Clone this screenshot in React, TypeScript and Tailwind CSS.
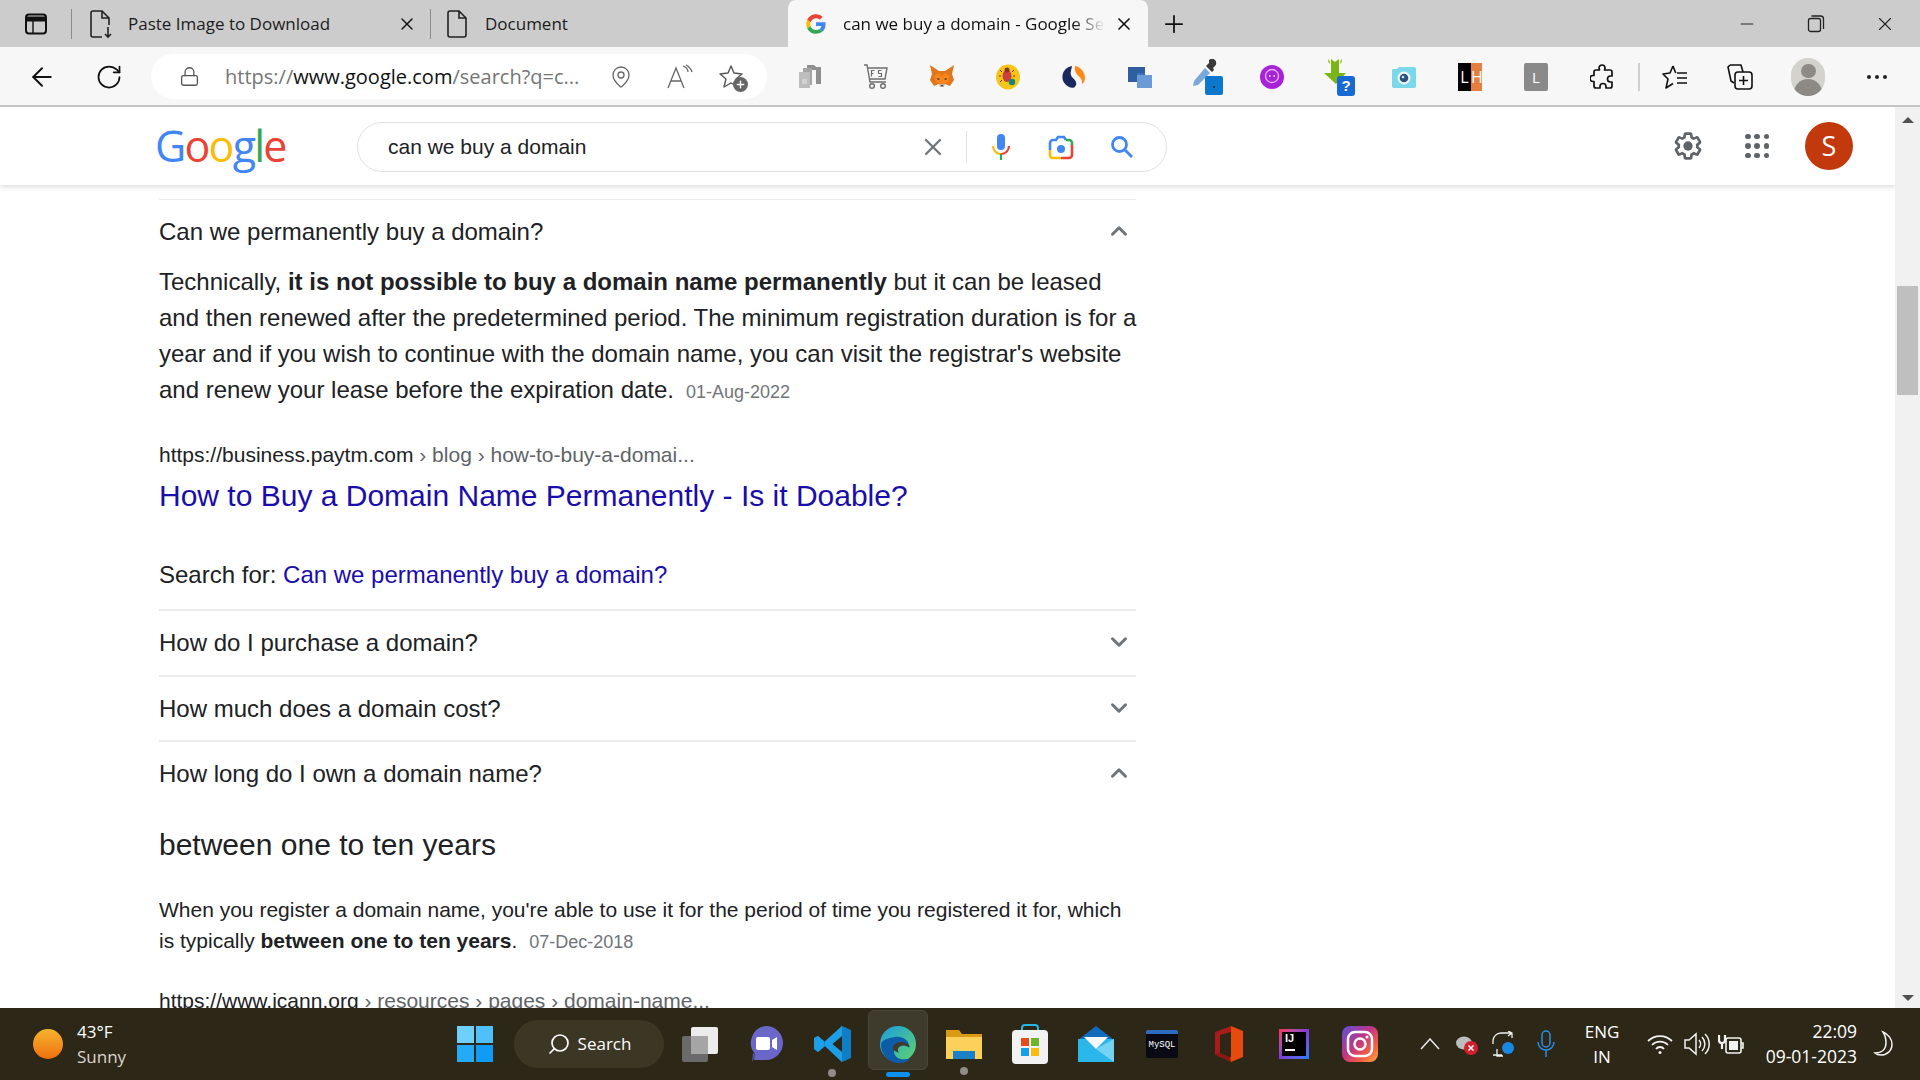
import React from "react";
import {
  ArrowLeft,
  ChevronDown,
  ChevronUp,
  Lock,
  MapPin,
  Minus,
  Plus,
  RotateCw,
  Search,
  X,
} from "lucide-react";

function PageIcon({ download = false }: { download?: boolean }) {
  return (
    <svg width="24" height="30" viewBox="0 0 24 30" fill="none" stroke="#222" strokeWidth="1.6">
      <path d="M4 2h9l7 7v7M20 9h-7V2M4 2Q2 2 2 4v22q0 2 2 2h9" />
      {download ? <path d="M19 18v10m-3-3 3 3 3-3" /> : <path d="M13 28h5q2 0 2-2V16" />}
    </svg>
  );
}

function SidebarIcon() {
  return (
    <svg width="24" height="24" viewBox="0 0 24 24" fill="none" stroke="#111" strokeWidth="2">
      <rect x="2" y="2.5" width="20" height="19" rx="3" />
      <path d="M2 7h20" strokeWidth="5" />
      <path d="M9 8v13" strokeWidth="1.4" />
    </svg>
  );
}

function GFavicon() {
  return (
    <svg width="20" height="20" viewBox="0 0 48 48">
      <path fill="#ea4335" d="M24 10c3.500 0 6.600 1.200 9.100 3.500l6.800-6.800C35.800 2.900 30.300.5 24 .5 14.800.5 6.900 5.800 3 13.500l7.900 6.100C12.800 14 17.900 10 24 10z" />
      <path fill="#4285f4" d="M47 24.500c0-1.600-.2-3.200-.4-4.500H24v9h13c-.6 3-2.300 5.500-4.800 7.200l7.700 6C44.300 38 47 31.800 47 24.500z" />
      <path fill="#fbbc05" d="M10.900 28.700A14 14 0 0 1 10.900 19.600L3 13.500a23.500 23.500 0 0 0 0 21z" />
      <path fill="#34a853" d="M24 47.500c6.300 0 11.600-2.100 15.900-5.300l-7.700-6c-2.100 1.400-4.900 2.300-8.200 2.300-6.100 0-11.200-4-13.100-9.800L3 34.500C6.900 42.200 14.800 47.500 24 47.500z" />
    </svg>
  );
}

function TabItem({
  icon,
  title,
  className,
  closeClass,
}: {
  icon: React.ReactNode;
  title: string;
  className: string;
  closeClass: string;
}) {
  return (
    <div className={`flex items-center h-full ${className}`}>
      <div className="w-[54px] flex justify-center shrink-0">{icon}</div>
      <span className="text-[17px] text-[#1c1c1c] whitespace-nowrap">{title}</span>
      <X size={20} strokeWidth={1.7} className={`text-[#111] shrink-0 ${closeClass}`} />
    </div>
  );
}

function TabBar() {
  return (
    <div className="h-[47px] bg-[#cccccc] flex items-center relative">
      <div className="w-[71px] flex justify-center">
        <SidebarIcon />
      </div>
      <div className="w-px h-[30px] bg-[#8a8a8a]" />
      <TabItem
        icon={<PageIcon download />}
        title="Paste Image to Download"
        className="w-[358px] pl-[2px]"
        closeClass="ml-[67px]"
      />
      <div className="w-px h-[30px] bg-[#8a8a8a]" />
      <TabItem
        icon={<PageIcon />}
        title="Document"
        className="w-[357px]"
        closeClass="ml-[219px]"
      />
      <div className="h-full w-[360px] bg-[#f7f7f7] rounded-t-[8px] flex items-center">
        <div className="w-[55px] flex justify-center">
          <GFavicon />
        </div>
        <span className="text-[17px] text-[#111] w-[262px] overflow-hidden whitespace-nowrap [mask-image:linear-gradient(to_right,black_88%,transparent)]">
          can we buy a domain - Google Search
        </span>
        <X size={20} strokeWidth={2} className="text-[#111] ml-[9px]" />
      </div>
      <Plus size={28} strokeWidth={1.5} className="text-[#111] ml-[12px]" />
      <Minus size={20} strokeWidth={1.3} className="text-[#222] ml-[549px]" />
      <svg className="ml-[50px]" width="18" height="20" viewBox="0 0 18 20" fill="none" stroke="#222" strokeWidth="1.3">
        <rect x="1.500" y="4.500" width="12" height="13" rx="2" />
        <path d="M4.500 2h9a3 3 0 0 1 3 3v10" />
      </svg>
      <X size={22} strokeWidth={1.2} className="text-[#222] ml-[49px]" />
    </div>
  );
}

function Slot({ children, className = "" }: { children: React.ReactNode; className?: string }) {
  return <div className={`flex items-center justify-center shrink-0 w-[66px] ${className}`}>{children}</div>;
}

function FoxIcon() {
  return (
    <svg width="26" height="26" viewBox="0 0 26 26">
      <path fill="#e2761b" d="M1 1l9 6h6l9-6-2 9 2 6-4 6-5-2h-6l-5 2-4-6 2-6z" />
      <path fill="#f6851b" d="M5 12l5-3 3 3 3-3 5 3-2 6-4 2h-4l-4-2z" />
      <path fill="#c0ad9e" d="M10 20h6l-1 3h-4z" />
      <path fill="#233447" d="M8 14l3 1-2 1zM18 14l-3 1 2 1zM12 21h2l-1 2z" />
    </svg>
  );
}

function ExtensionIcons() {
  return (
    <>
      <Slot>
        <svg width="24" height="26" viewBox="0 0 24 26">
          <path fill="#8f8f8f" d="M9 1h7l2 2h5v17h-5V6H9z" />
          <path fill="#a5a5a5" d="M5 4h9v17H5z" />
          <path fill="#bdbdbd" d="M1 8h11v16H1z" />
          <path fill="#d2d2d2" d="M4 15h5v5H4z" />
        </svg>
      </Slot>
      <Slot>
        <svg width="26" height="26" viewBox="0 0 26 26" fill="none" stroke="#6d6d6d" strokeWidth="1.400">
          <path d="M1 1h3l3 17h16" />
          <path d="M5 4h19l-2 11H7" />
          <circle cx="9" cy="22" r="2.300" />
          <circle cx="20" cy="22" r="2.300" />
          <path d="M10 7H7v6M7 10h2M17 7h-3v3h3v3h-3" strokeWidth="1.200" transform="translate(1.500 -.5)" />
        </svg>
      </Slot>
      <Slot>
        <FoxIcon />
      </Slot>
      <Slot>
        <svg width="24" height="26" viewBox="0 0 24 26">
          <ellipse cx="12" cy="13" rx="12" ry="12.500" fill="#f5c518" />
          <ellipse cx="11" cy="12" rx="4.500" ry="6" fill="#c9403e" />
          <circle cx="11" cy="6" r="2.500" fill="#8b3033" />
          <path stroke="#7a2a2a" strokeWidth="1" d="M6 8l-2-2M16 8l2-2M5 12H3M17 12h2M6 16l-2 2" />
          <circle cx="16" cy="18" r="3.200" fill="#16857a" />
        </svg>
      </Slot>
      <Slot>
        <svg width="24" height="24" viewBox="0 0 24 24">
          <path fill="#1b2a5e" d="M10 1a11 11 0 0 0-3 21c3 1.500 6 1 7-2 1-3-1-5-3-7-2-2-3-4-2-7 .2-2 1-4 1-5z" />
          <path fill="#ff8a1a" d="M13 1c4 0 10 5 10 12 0 2-1 5-3 6 .5-3-.5-5-2.500-7C15 9.500 12 7 13 1z" />
        </svg>
      </Slot>
      <Slot>
        <svg width="24" height="24" viewBox="0 0 24 24">
          <rect x="0" y="2" width="17" height="15" fill="#2f5f9e" />
          <rect x="9" y="10" width="15" height="13" fill="#6b9bd6" />
          <path fill="#3d72b8" d="M9 8h8v2H9z" />
        </svg>
      </Slot>
      <Slot className="relative">
        <svg width="32" height="36" viewBox="0 0 32 36" className="ml-[2px]">
          <path fill="#3a3a3a" d="M18 1a4 4 0 0 1 6 6l-2 2 1 2-2 2-6-6 2-2 1-1z" />
          <path fill="#7ba7d9" d="M14 9l5 5L7 26l-5 1 1-5z" />
          <rect x="14" y="17" width="18" height="19" rx="2" fill="#0b78ce" />
          <circle cx="23" cy="28" r="1" fill="#06223d" />
        </svg>
      </Slot>
      <Slot>
        <svg width="24" height="24" viewBox="0 0 24 24">
          <circle cx="12" cy="12" r="12" fill="#a823d8" />
          <circle cx="12" cy="11" r="6.500" fill="none" stroke="#e3b4f3" strokeWidth="1.300" />
          <path stroke="#fff" strokeWidth="1.500" d="M9 11h1.500M13.500 11H15" />
        </svg>
      </Slot>
      <Slot className="relative">
        <svg width="34" height="38" viewBox="0 0 34 38" className="ml-[2px]">
          <path fill="#7cb518" d="M9 1l4 3 4-3v14h7L14 26 2 15h7z" />
          <path fill="#a6d13a" d="M6 1l2 2v3L6 4zM20 1v3l-2 2V3z" />
          <rect x="15" y="18" width="18" height="20" rx="3" fill="#1769d4" />
          <text x="24" y="33" textAnchor="middle" fill="#fff" fontSize="15" fontWeight="700" fontFamily="Liberation Sans">?</text>
        </svg>
      </Slot>
      <Slot>
        <svg width="24" height="22" viewBox="0 0 24 22">
          <path fill="#7ad8ea" d="M1 3h4l2-2h15a2 2 0 0 1 2 2v17a2 2 0 0 1-2 2H2a2 2 0 0 1-2-2V4z" />
          <circle cx="12" cy="12" r="6.500" fill="#f2f8fb" />
          <circle cx="12" cy="12" r="4.300" fill="#27537c" />
          <circle cx="11" cy="11" r="1.300" fill="#cfe4f2" />
        </svg>
      </Slot>
      <Slot>
        <div className="w-[24px] h-[28px] flex text-[16px] leading-[28px] text-white text-center font-['Open_Sans',sans-serif]">
          <span className="w-[13px] bg-black">L</span>
          <span className="w-[11px] bg-[#e47f3f]">H</span>
        </div>
      </Slot>
      <Slot>
        <div className="w-[24px] h-[28px] rounded-[2px] bg-[#8a8a8a] text-white text-center text-[15px] leading-[28px] font-['Open_Sans',sans-serif]">
          L
        </div>
      </Slot>
      <Slot>
        <svg width="24" height="26" viewBox="0 0 24 26" fill="none" stroke="#111" strokeWidth="1.700" strokeLinejoin="round">
          <path d="M9 4a3 3 0 0 1 6 0c0 1-.5 1.500-.5 2H20q2 0 2 2v4h-1.500a3 3 0 0 0 0 6H22v4q0 2-2 2h-4v-1.500a3 3 0 0 0-6 0V24H6q-2 0-2-2v-4.500H3a3 3 0 0 1 0-6h1V8q0-2 2-2h3.500C9.500 5.500 9 5 9 4z" />
        </svg>
      </Slot>
    </>
  );
}

function Toolbar() {
  return (
    <div className="h-[60px] bg-[#f7f7f7] border-b-2 border-[#c4c4c4] flex items-center pt-[1px]">
      <ArrowLeft size={30} strokeWidth={1.5} className="text-[#111] ml-[27px]" />
      <RotateCw size={28} strokeWidth={1.500} className="text-[#111] ml-[38px]" />
      <div className="ml-[28px] w-[616px] h-[45px] rounded-full bg-white flex items-center shrink-0">
        <Lock size={21} strokeWidth={1.500} className="text-[#555] ml-[28px]" />
        <span className="ml-[25px] text-[20px] text-[#767676] whitespace-nowrap font-['Open_Sans',sans-serif] w-[357px]">
          https://<span className="text-[#111]">www.google.com</span>/search?q=c...
        </span>
        <MapPin size={24} strokeWidth={1.300} className="text-[#666] ml-[27px]" />
        <svg className="ml-[34px]" width="26" height="26" viewBox="0 0 26 26" fill="none" stroke="#666" strokeWidth="1.300">
          <path d="M1 24 9 4l8 20M4 17h10" />
          <path d="M16 2c3 1 5 3 5 6M19 1c3 1.500 5 4 6 7" />
        </svg>
        <div className="relative ml-[26px] w-[26px] h-[26px]">
          <svg width="26" height="26" viewBox="0 0 26 26" fill="none" stroke="#555" strokeWidth="1.400" strokeLinejoin="round">
            <path d="M12 2l3 7 8 1-6 5 2 8-7-4-7 4 2-8-6-5 8-1z" />
          </svg>
          <div className="absolute right-[-3px] bottom-[-2px] w-[15px] h-[15px] rounded-full bg-[#666] text-white flex items-center justify-center">
            <Plus size={11} strokeWidth={3} />
          </div>
        </div>
      </div>
      <div className="ml-[10px] flex items-center">
        <ExtensionIcons />
      </div>
      <div className="w-[2px] h-[28px] bg-[#cfcfcf] ml-[3px]" />
      <svg className="ml-[22px]" width="26" height="26" viewBox="0 0 26 26" fill="none" stroke="#111" strokeWidth="1.600" strokeLinejoin="round">
        <path d="M11 2l2.500 6.500H13M11 2 8 9l-7 1 5 5-2 9 7-4.500" />
        <path d="M15 9h10M15 14h10M15 19h10" />
      </svg>
      <svg className="ml-[39px]" width="26" height="28" viewBox="0 0 26 28" fill="none" stroke="#111" strokeWidth="1.600" strokeLinejoin="round">
        <path d="M3 2h11l2 7M3 2 1 4l3 14 3 2" />
        <rect x="8" y="9" width="17" height="17" rx="3" />
        <path d="M16.500 13v9M12 17.500h9" />
      </svg>
      <div className="ml-[38px] w-[34px] h-[38px] rounded-full bg-[#d3d2cd] overflow-hidden flex flex-col items-center">
        <div className="w-[15px] h-[18px] mt-[6px] rounded-full bg-[#8d8a85]" />
        <div className="w-[28px] h-[20px] mt-[1px] rounded-t-full bg-[#8d8a85]" />
      </div>
      <div className="ml-[42px] flex gap-[4px]">
        <span className="w-[4px] h-[4px] rounded-full bg-[#222]" />
        <span className="w-[4px] h-[4px] rounded-full bg-[#222]" />
        <span className="w-[4px] h-[4px] rounded-full bg-[#222]" />
      </div>
    </div>
  );
}

function GoogleLogo() {
  return (
    <div className="w-[126px] ml-[-2px] mr-[2px] text-[43px] leading-[50px] tracking-[-1.800px] font-medium font-['Open_Sans',sans-serif] whitespace-nowrap">
      <span className="text-[#4285f4]">G</span>
      <span className="text-[#ea4335]">o</span>
      <span className="text-[#fbbc05]">o</span>
      <span className="text-[#4285f4]">g</span>
      <span className="text-[#34a853]">l</span>
      <span className="text-[#ea4335]">e</span>
    </div>
  );
}

function SearchHeader() {
  return (
    <div className="h-[78px] shrink-0 bg-white flex items-center pl-[157px] shadow-[0_2px_5px_rgba(0,0,0,0.14)] relative z-10">
      <GoogleLogo />
      <div className="ml-[74px] mt-[2px] w-[810px] h-[50px] rounded-full border border-[#dfe1e5] flex items-center shrink-0">
        <span className="ml-[30px] text-[21px] text-[#202124] w-[530px] font-['Liberation_Sans',sans-serif]">can we buy a domain</span>
        <X size={28} strokeWidth={1.900} className="text-[#70757a] ml-[1px]" />
        <div className="w-px h-[32px] bg-[#dfe1e5] ml-[19px]" />
        <svg className="ml-[24px]" width="20" height="28" viewBox="0 0 20 28" fill="none">
          <rect x="6" y="1" width="8" height="16" rx="4" fill="#4285f4" />
          <path d="M2 13a8 8 0 0 0 8 8" stroke="#fbbc05" strokeWidth="2.200" />
          <path d="M18 13a8 8 0 0 1-8 8" stroke="#ea4335" strokeWidth="2.200" />
          <path d="M10 21v6" stroke="#34a853" strokeWidth="2.200" />
        </svg>
        <svg className="ml-[37px]" width="26" height="26" viewBox="0 0 26 26" fill="none" strokeWidth="2.600">
          <path d="M2 16v-7a3 3 0 0 1 3-3h3l2-3h6l2 3" stroke="#4285f4" />
          <path d="M18 6h3a3 3 0 0 1 3 3v2" stroke="#34a853" />
          <path d="M24 11v10a3 3 0 0 1-3 3h-8" stroke="#ea4335" />
          <path d="M13 24H5a3 3 0 0 1-3-3v-5" stroke="#fbbc05" />
          <circle cx="13" cy="15" r="4" fill="#4285f4" stroke="none" />
        </svg>
        <svg className="ml-[36px]" width="24" height="24" viewBox="0 0 24 24" fill="none" stroke="#4285f4" strokeWidth="2.800">
          <circle cx="9.500" cy="9.500" r="7" />
          <path d="M14.500 14.500 22 22" />
        </svg>
      </div>
      <svg className="ml-[505px]" width="32" height="32" viewBox="0 0 24 24" fill="#5f6368">
        <path d="M13.850 22.250h-3.700c-.74 0-1.360-.54-1.470-1.270l-.27-1.890c-.27-.14-.53-.29-.79-.46l-1.800.72c-.7.260-1.470-.03-1.810-.65L2.200 15.530c-.35-.66-.2-1.440.36-1.880l1.530-1.190c-.01-.15-.02-.3-.02-.46 0-.15.01-.31.02-.46l-1.520-1.190c-.59-.45-.74-1.260-.37-1.880l1.850-3.190c.34-.62 1.110-.9 1.790-.63l1.810.73c.26-.17.52-.32.780-.46l.27-1.910c.11-.7.730-1.250 1.460-1.250h3.700c.74 0 1.360.54 1.470 1.270l.27 1.890c.27.140.53.290.79.460l1.800-.72c.71-.26 1.480.030 1.820.650l1.840 3.180c.36.660.200 1.440-.36 1.880l-1.520 1.190c.01.150.02.300.02.460s-.01.310-.02.460l1.520 1.190c.560.450.720 1.230.370 1.860l-1.860 3.220c-.34.620-1.110.900-1.800.630l-1.800-.720c-.26.170-.52.320-.78.460l-.27 1.910c-.1.680-.72 1.220-1.470 1.220zm-3.260-2h2.820l.37-2.550.53-.22c.44-.18.880-.44 1.340-.78l.45-.34 2.380.96 1.410-2.450-2.030-1.580.07-.56c.03-.26.060-.51.060-.78s-.03-.53-.06-.78l-.07-.56 2.030-1.580-1.390-2.400-2.390.96-.45-.35c-.42-.32-.87-.58-1.330-.77l-.52-.22-.37-2.550h-2.820l-.37 2.550-.53.210c-.44.190-.88.440-1.340.790l-.45.330-2.380-.95-1.390 2.390 2.030 1.580-.07.560a7 7 0 0 0-.06.790c0 .26.020.530.060.780l.07.560-2.030 1.580 1.410 2.450 2.380-.960.450.350c.43.330.860.580 1.330.770l.53.220.38 2.550z" />
        <circle cx="12" cy="12" r="3.500" />
      </svg>
      <div className="ml-[41px] grid grid-cols-3 gap-[4px] w-[24px]">
        {Array.from({ length: 9 }).map((_, i) => (
          <span key={i} className="w-[5.500px] h-[5.500px] rounded-full bg-[#5f6368]" />
        ))}
      </div>
      <div className="ml-[36px] w-[48px] h-[48px] rounded-full bg-[#c1390c] text-white text-[27px] flex items-center justify-center">
        S
      </div>
    </div>
  );
}

function QuestionRow({ label, open, className }: { label: string; open?: boolean; className: string }) {
  return (
    <div className={`flex items-center justify-between pr-[8px] text-[24px] text-[#202124] ${className}`}>
      <span>{label}</span>
      {open ? (
        <ChevronUp size={26} strokeWidth={2.800} className="text-[#70757a] mr-[-4px] mt-[-2px]" />
      ) : (
        <ChevronDown size={26} strokeWidth={2.800} className="text-[#70757a] mr-[-4px] mt-[-2px]" />
      )}
    </div>
  );
}

function ResultsColumn() {
  return (
    <div className="ml-[159px] w-[977px] font-['Liberation_Sans',sans-serif]">
      <div className="h-px bg-[#ebebeb] mt-[14px]" />
      <QuestionRow label="Can we permanently buy a domain?" open className="h-[64px]" />
      <p className="text-[24px] leading-[36px] text-[#202124] mr-[-6px]">
        Technically, <b>it is not possible to buy a domain name permanently</b> but it can be leased and then renewed
        after the predetermined period. The minimum registration duration is for a year and if you wish to continue
        with the domain name, you can visit the registrar's website and renew your lease before the expiration date.
        <span className="text-[18px] text-[#70757a] ml-[12px]">01-Aug-2022</span>
      </p>
      <div className="mt-[30px] text-[21px] leading-[30px] text-[#202124]">
        https://business.paytm.com <span className="text-[#5f6368]">› blog › how-to-buy-a-domai...</span>
      </div>
      <div className="mt-[6px] text-[30px] leading-[40px] text-[#1a0dab]">
        How to Buy a Domain Name Permanently - Is it Doable?
      </div>
      <div className="mt-[41px] text-[24px] leading-[36px] text-[#202124]">
        Search for: <span className="text-[#1a0dab]">Can we permanently buy a domain?</span>
      </div>
      <div className="h-[2px] bg-[#ebebeb] mt-[16px]" />
      <QuestionRow label="How do I purchase a domain?" className="h-[64px]" />
      <div className="h-[2px] bg-[#ebebeb]" />
      <QuestionRow label="How much does a domain cost?" className="h-[63px]" />
      <div className="h-[2px] bg-[#ebebeb]" />
      <QuestionRow label="How long do I own a domain name?" open className="h-[63px]" />
      <div className="mt-[20px] text-[30px] leading-[40px] text-[#202124]">between one to ten years</div>
      <p className="mt-[29px] text-[21px] leading-[31px] text-[#202124]">
        When you register a domain name, you're able to use it for the period of time you registered it for, which is
        typically <b>between one to ten years</b>.
        <span className="text-[18px] text-[#70757a] ml-[12px]">07-Dec-2018</span>
      </p>
      <div className="mt-[28px] text-[21px] leading-[30px] text-[#202124]">
        https://www.icann.org <span className="text-[#5f6368]">› resources › pages › domain-name...</span>
      </div>
    </div>
  );
}

function Scrollbar() {
  return (
    <div className="w-[25px] shrink-0 bg-[#f1f1f1] flex flex-col items-center">
      <div className="mt-[10px] w-0 h-0 border-x-[6px] border-x-transparent border-b-[6px] border-b-[#505050]" />
      <div className="mt-[163px] w-[21px] h-[109px] bg-[#bfbfbf]" />
      <div className="mt-auto mb-[7px] w-0 h-0 border-x-[6px] border-x-transparent border-t-[6px] border-t-[#505050]" />
    </div>
  );
}

function WindowsLogo() {
  return (
    <div className="grid grid-cols-2 gap-[2px] w-[36px] h-[36px]">
      <span className="bg-[#6fd0fb]" />
      <span className="bg-[#4fc0fa]" />
      <span className="bg-[#25aaf8]" />
      <span className="bg-[#109bf5]" />
    </div>
  );
}

function TaskbarApps() {
  return (
    <>
      <Slot>
        <svg width="36" height="36" viewBox="0 0 36 36">
          <rect x="0" y="10" width="26" height="26" rx="2" fill="#6a6a6a" />
          <rect x="9" y="1" width="27" height="27" rx="2" fill="#ececec" />
          <rect x="9" y="10" width="17" height="18" fill="#a5a5a5" />
        </svg>
      </Slot>
      <Slot>
        <svg width="36" height="38" viewBox="0 0 36 38">
          <path fill="#6b67c9" d="M18 1a17 17 0 0 1 0 34H6l1-6A17 17 0 0 1 18 1z" />
          <path fill="#5450a8" d="M5 28l3 2-4 7z" />
          <rect x="8" y="12" width="14" height="13" rx="2" fill="#fff" />
          <path fill="#fff" d="M24 15l5-3v13l-5-3z" />
        </svg>
      </Slot>
      <Slot className="relative">
        <svg width="38" height="38" viewBox="0 0 38 38" className="ml-[2px]">
          <path fill="#0e7fc7" d="M28 1l9 4v28l-9 4L11 21 4 27l-4-3v-11l4-2 7 6z" />
          <path fill="#22a7f0" d="M28 1v36L11 21l-1-4zM11 17 4 11 0 13v11l4 3 7-6z" opacity=".8" />
          <path fill="#2b2717" d="M28 11v16l-9.500-8z" />
        </svg>
        <span className="absolute bottom-[-14px] w-[8px] h-[8px] rounded-full bg-[#8f8d85]" />
      </Slot>
      <Slot className="relative">
        <div className="absolute top-[-15px] left-[3px] w-[60px] h-[60px] rounded-[6px] bg-[#3e3a2c] border border-[#4a4637]" />
        <svg width="38" height="38" viewBox="0 0 38 38" className="relative">
          <defs>
            <linearGradient id="edgeTop" x1="0" y1="0" x2="1" y2="1">
              <stop offset="0" stopColor="#1b9de2" />
              <stop offset="1" stopColor="#5fd46a" />
            </linearGradient>
          </defs>
          <circle cx="19" cy="19" r="18" fill="url(#edgeTop)" />
          <path fill="#0c5ca8" d="M2 20c0 10 8 18 18 18 5 0 9-2 12-5-8 3-17 1-17-7 0-3 3-6 7-6 3 0 7 1 8 3 1-9-8-12-14-11C9 13 2 15 2 20z" />
          <path fill="#3e3a2c" d="M14 25c-1-5 3-8 8-8 4 0 8 2 9 5-3-1-6-2-9-1s-4 4-2 7z" />
        </svg>
        <span className="absolute bottom-[-14px] w-[24px] h-[5px] rounded-full bg-[#0a91f0]" />
      </Slot>
      <Slot className="relative">
        <svg width="38" height="34" viewBox="0 0 38 34">
          <path fill="#d99b16" d="M1 3h13l3 4h20v25H1z" />
          <path fill="#fbd15c" d="M1 10h36v22H1z" />
          <rect x="8" y="24" width="22" height="8" fill="#1a81c9" />
        </svg>
        <span className="absolute bottom-[-14px] w-[8px] h-[8px] rounded-full bg-[#8f8d85]" />
      </Slot>
      <Slot>
        <svg width="36" height="40" viewBox="0 0 36 40">
          <path fill="none" stroke="#27b6e3" strokeWidth="2" d="M10 7V4q0-3 3-3h10q3 0 3 3v3" />
          <rect x="0" y="6" width="36" height="34" rx="4" fill="#f2f2f2" />
          <rect x="9" y="14" width="8" height="8" fill="#e74c1f" />
          <rect x="19" y="14" width="8" height="8" fill="#6cb52c" />
          <rect x="9" y="24" width="8" height="8" fill="#14a0e8" />
          <rect x="19" y="24" width="8" height="8" fill="#fbb90b" />
        </svg>
      </Slot>
      <Slot>
        <svg width="36" height="36" viewBox="0 0 36 36">
          <path fill="#0f6cbd" d="M18 0l18 14H0z" />
          <path fill="#2cb7ea" d="M0 13h36v23H0z" />
          <path fill="#f3f7fb" d="M6 11h24L18 23z" />
          <path fill="#74d3f3" d="M18 23 36 13v23z" />
        </svg>
      </Slot>
      <Slot>
        <div className="w-[32px] h-[28px] bg-[#0a0a14] border-t-[4px] border-[#2d6cc0] rounded-[2px] text-[9px] leading-[22px] text-white text-center font-['Liberation_Mono',monospace] overflow-hidden">
          MySQL
        </div>
      </Slot>
      <Slot>
        <svg width="30" height="36" viewBox="0 0 30 36">
          <path fill="#e64a0d" d="M18 0l12 5v26l-12 5-4-3 4-2V8z" />
          <path fill="#a81c1c" d="M18 0 2 6v23l5-2V9l11-3z" />
          <path fill="#8c1717" d="M2 29l16 7-1-5-10-4z" />
        </svg>
      </Slot>
      <Slot>
        <div className="w-[30px] h-[30px] p-[3px] bg-gradient-to-br from-[#fe2857] via-[#7c3bd8] to-[#087cfa]">
          <div className="w-full h-full bg-black text-white text-[11px] leading-[13px] pl-[3px] font-bold font-['Liberation_Sans',sans-serif]">
            IJ
            <div className="w-[10px] h-[2px] bg-white mt-[4px]" />
          </div>
        </div>
      </Slot>
      <Slot>
        <svg width="36" height="36" viewBox="0 0 36 36">
          <defs>
            <linearGradient id="instaGrad" x1="0" y1="0" x2="1" y2="1">
              <stop offset="0" stopColor="#5b51d8" />
              <stop offset=".45" stopColor="#c13584" />
              <stop offset=".75" stopColor="#f56040" />
              <stop offset="1" stopColor="#fcaf45" />
            </linearGradient>
          </defs>
          <rect width="36" height="36" rx="8" fill="url(#instaGrad)" />
          <rect x="6" y="6" width="24" height="24" rx="7" fill="none" stroke="#fff" strokeWidth="2.500" />
          <circle cx="18" cy="18" r="5.500" fill="none" stroke="#fff" strokeWidth="2.500" />
          <circle cx="25" cy="11" r="1.600" fill="#fff" />
        </svg>
      </Slot>
    </>
  );
}

function SystemTray() {
  return (
    <div className="flex items-center text-white font-['Open_Sans',sans-serif]">
      <svg className="ml-[3px]" width="20" height="12" viewBox="0 0 20 12" fill="none" stroke="#e8e8e8" strokeWidth="1.500">
        <path d="M1 11 10 1l9 10" />
      </svg>
      <svg className="ml-[15px]" width="24" height="24" viewBox="0 0 24 24">
        <ellipse cx="9" cy="11" rx="8" ry="6.500" fill="#bdbdbd" />
        <circle cx="16" cy="16" r="7" fill="#d3202f" />
        <path stroke="#fff" strokeWidth="1.500" d="M13.500 13.500l5 5M18.500 13.500l-5 5" />
      </svg>
      <svg className="ml-[13px]" width="24" height="26" viewBox="0 0 24 26" fill="none" stroke="#f2f2f2" strokeWidth="1.300">
        <path d="M1 13V10a8 8 0 0 1 8-8h11M16 0l4 2-4 3M20 3v4" />
        <path d="M1 24h9M5 18v7h6" />
        <circle cx="16" cy="17" r="6" fill="#1a88e0" stroke="none" />
      </svg>
      <svg className="ml-[20px]" width="20" height="28" viewBox="0 0 20 28" fill="none" stroke="#2b8fe8" strokeWidth="1.500">
        <rect x="6" y="1" width="8" height="16" rx="4" />
        <path d="M2 12a8 8 0 0 0 16 0M10 20v7" />
      </svg>
      <div className="ml-[18px] w-[56px] text-center text-[17px] leading-[25px]">
        <div>ENG</div>
        <div>IN</div>
      </div>
      <svg className="ml-[17px]" width="26" height="22" viewBox="0 0 26 22" fill="none" stroke="#f2f2f2" strokeWidth="1.800">
        <path d="M1 8a17 17 0 0 1 24 0M5 12a11 11 0 0 1 16 0M9 16a5 5 0 0 1 8 0" />
        <circle cx="13" cy="19.500" r="1.500" fill="#f2f2f2" stroke="none" />
      </svg>
      <svg className="ml-[11px]" width="26" height="24" viewBox="0 0 26 24" fill="none" stroke="#f2f2f2" strokeWidth="1.500">
        <path d="M1 8h4l7-6v20l-7-6H1z" />
        <path d="M15 8a6 6 0 0 1 0 8M18 5a10 10 0 0 1 0 14M21 2a14 14 0 0 1 0 20" />
      </svg>
      <svg className="ml-[8px]" width="26" height="24" viewBox="0 0 26 24" fill="none" stroke="#f2f2f2" strokeWidth="1.600">
        <rect x="8" y="6" width="15" height="15" rx="2" />
        <rect x="11" y="9" width="9" height="9" fill="#f2f2f2" stroke="none" />
        <path d="M1 3v5a3 3 0 0 0 6 0V3M4 11v6" strokeWidth="2.200" />
        <path d="M23 11h2v5h-2" />
      </svg>
      <div className="ml-[21px] w-[92px] text-right text-[17.500px] leading-[25px] whitespace-nowrap">
        <div>22:09</div>
        <div>09-01-2023</div>
      </div>
      <svg className="ml-[16px]" width="22" height="28" viewBox="0 0 22 28" fill="none" stroke="#f2f2f2" strokeWidth="1.500">
        <path d="M10 2c5 2 9 7 9 12 0 7-5 11-11 11-3 0-5-1-6-2 7 0 11-4 11-10 0-4-1-8-3-11z" />
      </svg>
    </div>
  );
}

function Taskbar() {
  return (
    <div className="h-[72px] shrink-0 bg-[#2d2717] flex items-center relative z-10 text-white font-['Open_Sans',sans-serif]">
      <div className="w-[442px] flex items-center pl-[33px] shrink-0">
        <div className="w-[30px] h-[30px] rounded-full bg-gradient-to-b from-[#f4b32e] to-[#ef6f0c]" />
        <div className="ml-[14px] text-[17px] leading-[25px]">
          <div>43°F</div>
          <div className="text-[#d8d6cf]">Sunny</div>
        </div>
      </div>
      <div className="w-[66px] flex justify-center shrink-0">
        <WindowsLogo />
      </div>
      <div className="ml-[6px] w-[150px] h-[48px] rounded-full bg-[#3c3625] flex items-center justify-center gap-[7px] shrink-0 text-[17px]">
        <Search size={24} strokeWidth={1.700} className="-scale-x-100" />
        <span>Search</span>
      </div>
      <div className="ml-[3px] flex items-center">
        <TaskbarApps />
      </div>
      <div className="ml-[24px]">
        <SystemTray />
      </div>
    </div>
  );
}

export default function App() {
  return (
    <div className="w-[1920px] h-[1080px] overflow-hidden flex flex-col font-['Open_Sans',sans-serif] bg-white">
      <TabBar />
      <Toolbar />
      <div className="flex-1 flex min-h-0">
        <div className="flex-1 flex flex-col min-w-0 overflow-hidden">
          <SearchHeader />
          <ResultsColumn />
        </div>
        <Scrollbar />
      </div>
      <Taskbar />
    </div>
  );
}
